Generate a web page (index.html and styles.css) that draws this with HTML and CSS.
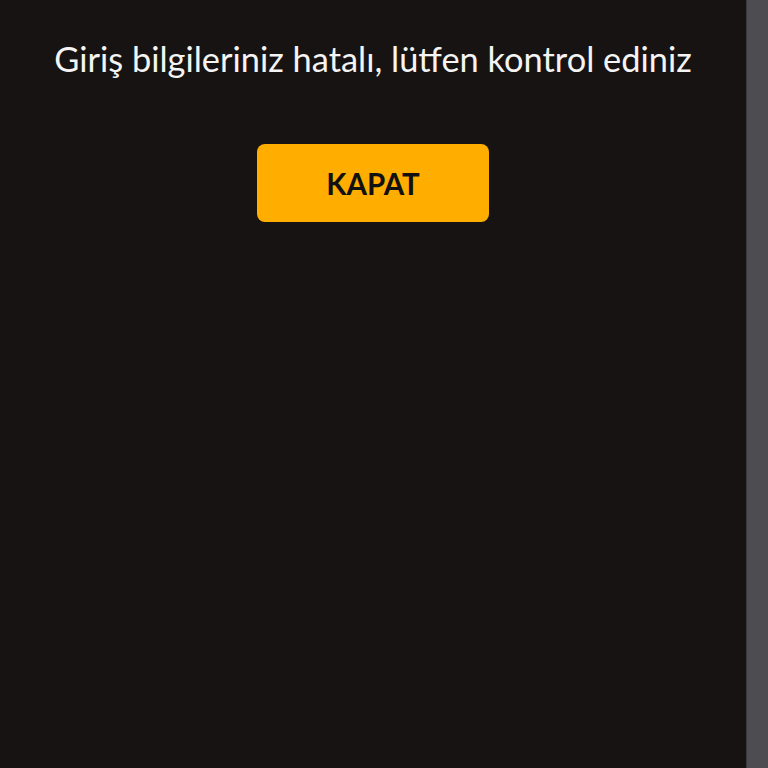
FILE: index.html
```html
<!DOCTYPE html>
<html lang="tr">
  <head>
    <meta charset="UTF-8" />
    <title>Giriş</title>
    <link rel="stylesheet" href="styles.css">
  </head>
  <body>
    <main class="dialog">
      <p class="dialog__message">Giriş bilgileriniz hatalı, lütfen kontrol ediniz</p>
      <button type="button" class="dialog__close">KAPAT</button>
    </main>
    <aside class="scroll_track"></aside>
  </body>
</html>
```

FILE: styles.css
```css
:root {
  --color-bg: #161312;
  --color-white: #f4f4f4;
  --color-yellow: #ffae00;
  --color-track: #4d4d51;
  font-family: Lato, 'Noto Sans', sans-serif;
}
* {
  margin: 0;
  padding: 0;
  box-sizing: border-box;
}
body {
  display: flex;
  height: 768px;
  background-color: var(--color-bg);
}
/* ダイアログ */
.dialog {
  flex: 1;
  display: flex;
  flex-direction: column;
  align-items: center;
  padding-top: 37px;
}
.dialog__message {
  font-size: 34.4px;
  line-height: 44px;
  color: var(--color-white);
}
.dialog__close {
  width: 232px;
  height: 78px;
  margin-top: 63px;
  border: none;
  border-radius: 8px;
  background-color: var(--color-yellow);
  font-family: inherit;
  font-size: 29.5px;
  font-weight: 700;
  color: #111;
}
/* スクロール */
.scroll_track {
  width: 22px;
  border-left: 1px solid #3a3a3e;
  background-color: var(--color-track);
}
```
